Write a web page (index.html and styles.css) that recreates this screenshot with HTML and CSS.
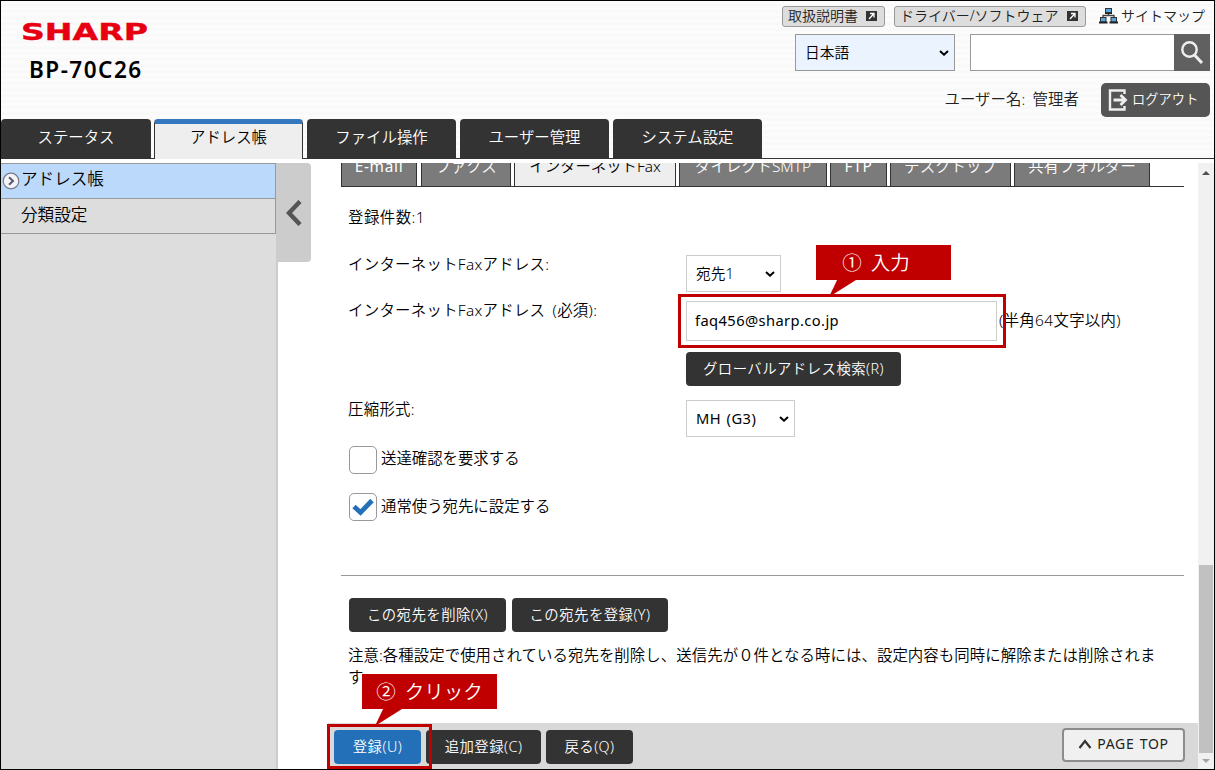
FILE: index.html
```html
<!DOCTYPE html>
<html lang="ja">
<head>
    <meta charset="utf-8">
    <title>BP-70C26</title>
    <link rel="stylesheet" href="styles.css">
</head>
<body>
    <div class="page">
        <div class="header">
            <div class="header-top">
                <div class="brand">
                    <svg class="logo" width="128" height="20" viewBox="0 0 128 20">
                        <text x="0" y="18" textLength="127" lengthAdjust="spacingAndGlyphs">SHARP</text>
                    </svg>
                    <div class="model">BP-70C26</div>
                </div>
                <div class="tools">
                    <div class="links">
                        <a class="link-button manual"><span>取扱説明書</span>
                            <svg width="11" height="10" viewBox="0 0 11 10"><rect width="11" height="10" fill="#333"/><path d="M3 8 7.5 3M4 2.5h4v4" stroke="#fff" stroke-width="1.3" fill="none"/></svg>
                        </a>
                        <a class="link-button driver"><span>ドライバー/ソフトウェア</span>
                            <svg width="11" height="10" viewBox="0 0 11 10"><rect width="11" height="10" fill="#333"/><path d="M3 8 7.5 3M4 2.5h4v4" stroke="#fff" stroke-width="1.3" fill="none"/></svg>
                        </a>
                        <a class="sitemap">
                            <svg width="19" height="16" viewBox="0 0 19 16">
                                <path d="M9.5 5v3M4 10V7.5h11V10" stroke="#444" stroke-width="1.4" fill="none"/>
                                <g fill="#55a5e0" stroke="#333"><rect x="6.5" y=".5" width="6" height="4.5"/><rect x="1.5" y="9.5" width="5.5" height="4.5"/><rect x="12" y="9.5" width="5.5" height="4.5"/></g>
                                <path d="M6 5.2h7M0 14.5h8.5M10.5 14.5h8.5" stroke="#222" stroke-width="1.8"/>
                            </svg>
                            <span>サイトマップ</span>
                        </a>
                    </div>
                    <div class="search-row">
                        <div class="select language"><span>日本語</span><svg class="arrow" width="10" height="6" viewBox="0 0 10 6"><path d="M1 1l4 3.7L9 1"/></svg></div>
                        <div class="search">
                            <input type="text">
                            <div class="search-button">
                                <svg width="24" height="26" viewBox="0 0 24 26"><circle cx="9.5" cy="9.5" r="7.2" stroke="#eee" stroke-width="2.4" fill="none"/><path d="M14.5 15l7.5 8" stroke="#eee" stroke-width="3"/></svg>
                            </div>
                        </div>
                    </div>
                    <div class="user-row">
                        <span class="user">ユーザー名: 管理者</span>
                        <a class="logout">
                            <svg width="20" height="22" viewBox="0 0 20 22"><path d="M16.5 5V1.5H2v19h14.5V17" stroke="#eee" stroke-width="2.4" fill="none"/><path d="M5.5 11H17M12.5 6l5 5-5 5" stroke="#eee" stroke-width="2.8" fill="none"/></svg>
                            <span>ログアウト</span>
                        </a>
                    </div>
                </div>
            </div>
            <div class="tabs">
                <div class="tab first">ステータス</div>
                <div class="tab active">アドレス帳</div>
                <div class="tab">ファイル操作</div>
                <div class="tab">ユーザー管理</div>
                <div class="tab">システム設定</div>
            </div>
        </div>

        <div class="main">
            <div class="sidebar">
                <div class="menu-item selected">
                    <svg class="bullet" width="18" height="18" viewBox="0 0 18 18"><circle cx="9" cy="9" r="7.8" fill="#f4f4f8" stroke="#777c8c" stroke-width="1.2"/><path d="M7 5.2l4 3.8-4 3.8" stroke="#555a6b" stroke-width="2" fill="none"/></svg>
                    アドレス帳
                </div>
                <div class="menu-item">分類設定</div>
            </div>
            <div class="toggle">
                <svg width="16" height="26" viewBox="0 0 16 26"><path d="M14 1.5L3 13l11 11.5" stroke="#555" stroke-width="4.5" fill="none"/></svg>
            </div>
            <div class="content">
                <div class="subtabs">
                    <div class="subtab email">E-mail</div>
                    <div class="subtab fax">ファクス</div>
                    <div class="subtab ifax active">インターネットFax</div>
                    <div class="subtab smtp">ダイレクトSMTP</div>
                    <div class="subtab ftp">FTP</div>
                    <div class="subtab desktop">デスクトップ</div>
                    <div class="subtab folder">共有フォルダー</div>
                </div>
                <div class="form">
                    <div class="count">登録件数:1</div>
                    <div class="row number-row">
                        <label>インターネットFaxアドレス:</label>
                        <div class="select number"><span>宛先1</span><svg class="arrow" width="10" height="6" viewBox="0 0 10 6"><path d="M1 1l4 3.7L9 1"/></svg></div>
                    </div>
                    <div class="row address-row">
                        <label>インターネットFaxアドレス (必須):</label>
                        <div class="address">
                            <input type="text" value="faq456@sharp.co.jp">
                            <span>(半角64文字以内)</span>
                            <div class="marker input-marker"></div>
                            <div class="callout input-callout">① 入力</div>
                        </div>
                    </div>
                    <div class="row global-row">
                        <label></label>
                        <button class="button global">グローバルアドレス検索(R)</button>
                    </div>
                    <div class="row compress-row">
                        <label>圧縮形式:</label>
                        <div class="select compress"><span>MH (G3)</span><svg class="arrow" width="10" height="6" viewBox="0 0 10 6"><path d="M1 1l4 3.7L9 1"/></svg></div>
                    </div>
                    <div class="check-row">
                        <span class="checkbox"></span>
                        <span>送達確認を要求する</span>
                    </div>
                    <div class="check-row">
                        <span class="checkbox"><svg width="22" height="18" viewBox="0 0 22 18"><path d="M2 8.5l6.5 6L20 2.5" stroke="#2470b8" stroke-width="4.8" fill="none"/></svg></span>
                        <span>通常使う宛先に設定する</span>
                    </div>
                </div>
                <div class="actions">
                    <button class="button delete">この宛先を削除(X)</button>
                    <button class="button save">この宛先を登録(Y)</button>
                </div>
                <div class="note">注意:各種設定で使用されている宛先を削除し、送信先が０件となる時には、設定内容も同時に解除または削除されま<br>す。</div>
                <div class="footer">
                    <button class="button submit">登録(U)</button>
                    <button class="button add">追加登録(C)</button>
                    <button class="button back">戻る(Q)</button>
                    <button class="page-top"><svg width="14" height="10" viewBox="0 0 14 10"><path d="M1.5 9L7 2l5.5 7" stroke="#333" stroke-width="2.2" fill="none"/></svg>PAGE TOP</button>
                    <div class="marker submit-marker"></div>
                    <div class="callout submit-callout">② クリック</div>
                </div>
            </div>
            <div class="scrollbar">
                <div class="scroll-up"></div>
                <div class="thumb"></div>
                <div class="scroll-down"></div>
            </div>
        </div>
    </div>
</body>
</html>
```

FILE: styles.css
```css
* {
    box-sizing: border-box;
}
body {
    margin: 0;
    font-family: "Noto Sans", "Noto Sans CJK JP", sans-serif;
    font-size: 15.4px;
    font-weight: 350;
    line-height: 22px;
    color: #000;
    background-color: #fff;
}
input, button {
    font-family: inherit;
    font-weight: inherit;
    margin: 0;
}
.page {
    width: 1215px;
    height: 770px;
    border: 1px solid #000;
    display: flex;
    flex-direction: column;
    overflow: hidden;
    white-space: nowrap;
}

/* header */
.header {
    height: 158px;
    border-bottom: 1px solid #333;
    background: repeating-linear-gradient(#fcfcfc 0, #fcfcfc 3px, #f9f9f9 3px, #f9f9f9 6px);
    display: flex;
    flex-direction: column;
    justify-content: space-between;
}
.header-top {
    display: flex;
    justify-content: space-between;
}
.brand {
    padding: 21px 0 0 20px;
}
.logo {
    display: block;
    overflow: visible;
    font-family: "DejaVu Sans", sans-serif;
    font-weight: bold;
    font-size: 23.5px;
    fill: #e60012;
    stroke: #e60012;
    stroke-width: 0.4;
}
.model {
    margin: 15px 0 0 8px;
    font-size: 22.5px;
    font-weight: 600;
    line-height: 26px;
    letter-spacing: 1.5px;
}
.tools {
    display: flex;
    flex-direction: column;
    align-items: flex-end;
    padding: 4px 4px 0 0;
    color: #222;
}
.links {
    display: flex;
    align-items: center;
    height: 22px;
    padding-right: 5px;
    font-size: 14px;
}
.link-button {
    display: flex;
    align-items: center;
    justify-content: space-between;
    height: 21px;
    border: 1px solid #999;
    border-radius: 3px;
    background-color: #ddd;
    padding: 0 7px 0 5px;
    margin-right: 9px;
}
.manual {
    width: 103px;
}
.driver {
    width: 192px;
    margin-right: 13px;
}
.sitemap {
    display: flex;
    align-items: center;
    gap: 3px;
}
.search-row {
    display: flex;
    gap: 15px;
    margin-top: 7px;
}
.select {
    display: flex;
    align-items: center;
    justify-content: space-between;
    height: 37px;
    border: 1px solid #ccc;
    background-color: #fff;
    padding: 0 5px 0 9px;
    font-size: 14.7px;
    color: #000;
}
.select span {
    margin-top: -2px;
}
.arrow {
    fill: none;
    stroke: #000;
    stroke-width: 2;
}
.language {
    width: 160px;
    border-color: #999;
    background-color: #ebf3ff;
}
.search {
    display: flex;
}
.search input {
    width: 204px;
    height: 37px;
    border: 1px solid #999;
    border-right: none;
}
.search-button {
    width: 36px;
    height: 37px;
    background-color: #606060;
    display: flex;
    align-items: center;
    justify-content: center;
}
.user-row {
    display: flex;
    align-items: center;
    gap: 22px;
    margin-top: 12px;
    letter-spacing: 0.1px;
    word-spacing: 3px;
}
.logout {
    display: flex;
    align-items: center;
    gap: 4px;
    width: 109px;
    height: 34px;
    padding-left: 7px;
    border-radius: 5px;
    background-color: #555;
    color: #fff;
    font-size: 13.2px;
}
.logout span {
    margin-top: -2px;
}
.tabs {
    display: flex;
    gap: 4px;
}
.tab {
    width: 149px;
    height: 39px;
    line-height: 38px;
    border-radius: 4px 4px 0 0;
    background-color: #333;
    color: #fff;
    text-align: center;
}
.tab.first {
    width: 150px;
    margin-right: -1px;
}
.tab.active {
    border: 1px solid #333;
    border-top: 5px solid #3478c2;
    border-bottom: none;
    line-height: 28px;
    height: 40px;
    margin-bottom: -1px;
    background-color: #eee;
    color: #000;
}

/* main area */
.main {
    flex: 1;
    display: flex;
    margin-top: 4px;
    min-height: 0;
}
.sidebar {
    width: 277px;
    background-color: #ddd;
    border-right: 2px solid #ccc;
}
.menu-item {
    display: flex;
    align-items: center;
    width: 275px;
    height: 35px;
    border: 1px solid #999;
    border-width: 0 1px 1px 0;
    padding: 0 0 3px 20px;
    font-size: 16.6px;
}
.menu-item.selected {
    height: 36px;
    border-top-width: 1px;
    padding: 0 0 5px 1px;
    background-color: #bbd9fa;
}
.bullet {
    position: relative;
    top: 2px;
    margin-right: 1px;
}
.toggle {
    width: 35px;
    height: 99px;
    margin-left: -2px;
    border-radius: 0 4px 4px 0;
    background-color: #ccc;
    display: flex;
    align-items: center;
    justify-content: center;
}
.content {
    flex: 1;
    display: flex;
    flex-direction: column;
    min-width: 0;
}
.subtabs {
    display: flex;
    align-items: flex-end;
    gap: 3px;
    width: 843px;
    height: 24px;
    margin-left: 30px;
    border-bottom: 1px solid #333;
    overflow: hidden;
}
.subtab {
    flex: none;
    height: 38px;
    line-height: 35px;
    border: 1px solid #333;
    border-bottom: none;
    background-color: #7b7b7b;
    color: #fff;
    text-align: center;
}
.subtab.active {
    background-color: #eee;
    color: #000;
}
.email { width: 76px; margin-right: 1px; letter-spacing: 0.7px; }
.fax { width: 90px; }
.ifax { width: 162px; }
.smtp { width: 148px; }
.ftp { width: 57px; letter-spacing: 0.7px; }
.desktop { width: 121px; }
.folder { width: 136px; }
.email, .ftp { font-weight: 400; }

/* form */
.form {
    width: 843px;
    height: 389px;
    margin-left: 30px;
    padding: 20px 0 0 7px;
    border-bottom: 1px solid #999;
}
.count {
    letter-spacing: 0.5px;
}
.row {
    display: flex;
}
.row label {
    width: 338px;
    letter-spacing: 0.3px;
    word-spacing: 3px;
}
.number-row {
    margin-top: 26px;
}
.number-row label, .compress-row label {
    margin-top: -1px;
}
.number {
    width: 95px;
}
.address-row {
    margin-top: 9px;
}
.address-row label {
    margin-top: -1px;
}
.address {
    position: relative;
    display: flex;
    align-items: center;
}
.address input {
    width: 311px;
    height: 40px;
    border: 1px solid #ccc;
    padding: 0 8px 2px;
    font-size: 14.7px;
    font-weight: 400;
    letter-spacing: 0.4px;
    color: #000;
}
.address span {
    margin: -1px 0 0 2px;
    letter-spacing: 0.35px;
}
.global-row {
    margin-top: 11px;
}
.compress-row {
    margin-top: 14px;
}
.compress {
    width: 109px;
    padding-left: 9px;
    font-weight: 400;
    letter-spacing: 0.5px;
    word-spacing: 1px;
}
.check-row {
    display: flex;
    gap: 4px;
    height: 28px;
    margin: 9px 0 0 1px;
    line-height: 26px;
}
.check-row + .check-row {
    margin-top: 19px;
    line-height: 28px;
}
.checkbox {
    display: flex;
    align-items: center;
    justify-content: center;
    width: 28px;
    height: 28px;
    border: 1px solid #999;
    border-radius: 5px;
    background-color: #fff;
}
.button {
    height: 34px;
    border: none;
    border-radius: 4px;
    padding: 0 0 3px;
    background-color: #333;
    color: #fff;
    font-size: 14.4px;
    letter-spacing: 0.45px;
}
.global {
    width: 215px;
    padding-bottom: 4px;
}
.actions {
    display: flex;
    gap: 6px;
    margin: 22px 0 0 38px;
}
.delete { width: 157px; }
.save { width: 156px; }
.note {
    margin: 13px 0 0 37px;
    letter-spacing: 0.08px;
}
.footer {
    position: relative;
    display: flex;
    align-items: center;
    height: 46px;
    margin: auto 0 0 17px;
    padding: 1px 13px 0 6px;
    background-color: #d9d9d9;
}
.submit {
    width: 87px;
    background-color: #2470b8;
}
.add {
    width: 115px;
    margin-left: 5px;
}
.back {
    width: 87px;
    margin-left: 5px;
}
.page-top {
    display: flex;
    align-items: center;
    justify-content: center;
    gap: 5px;
    width: 123px;
    height: 34px;
    margin: -4px 0 0 auto;
    padding: 0 0 2px;
    border: 2px solid #8c8c8c;
    border-radius: 4px;
    background-color: #f0f0f0;
    color: #222;
    font-size: 14px;
    font-weight: 400;
    letter-spacing: 0.7px;
    word-spacing: 1px;
}

/* red guides */
.marker {
    position: absolute;
    border: 3px solid #c00000;
}
.input-marker {
    left: -8px;
    top: -7px;
    width: 328px;
    height: 54px;
}
.submit-marker {
    left: -1px;
    top: 1px;
    width: 105px;
    height: 45px;
}
.callout {
    position: absolute;
    width: 135px;
    height: 35px;
    line-height: 35px;
    background-color: #c00000;
    color: #fff;
    font-size: 19.5px;
    text-align: center;
    word-spacing: 4px;
}
.callout::after {
    content: "";
    position: absolute;
    left: 13px;
    top: 100%;
    width: 27px;
    height: 17px;
    background-color: #c00000;
    clip-path: polygon(30% 0, 100% 0, 0 100%);
}
.input-callout {
    left: 130px;
    top: -56px;
    padding-right: 15px;
}
.submit-callout {
    left: 34px;
    top: -49px;
}

/* scrollbar */
.scrollbar {
    display: flex;
    flex-direction: column;
    align-items: center;
    width: 16px;
    background-color: #f1f1f1;
}
.thumb {
    width: 14px;
    height: 188px;
    margin-top: auto;
    background-color: #c1c1c1;
}
.scroll-up, .scroll-down {
    border: 4px solid transparent;
}
.scroll-up {
    border-top: none;
    border-bottom-color: #505050;
    margin-top: 8px;
}
.scroll-down {
    border-bottom: none;
    border-top-color: #a3a3a3;
    margin: 6px 0;
}
```
